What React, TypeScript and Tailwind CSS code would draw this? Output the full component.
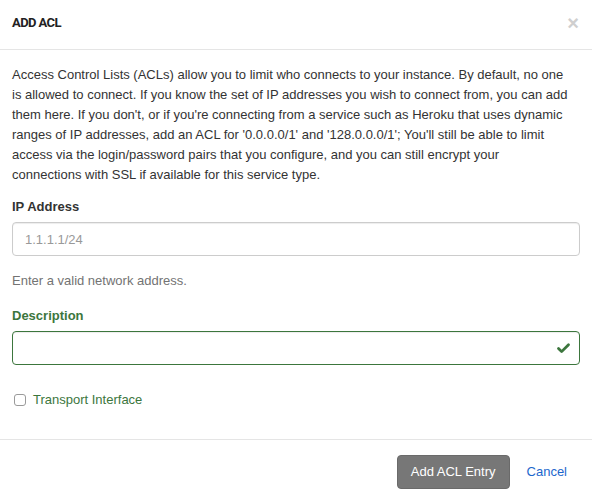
import { Check } from "lucide-react"

export default function App() {
  return (
    <div className="w-[592px] h-[500px] bg-white text-[#333] text-[13px] font-['Liberation_Sans',Arial,sans-serif]">
      <div className="h-[50px] px-3 pt-[14px] flex items-start justify-between border-b border-[#e5e5e5]">
        <h4 className="font-['Roboto',sans-serif] font-bold text-[13px] leading-[17px] tracking-[-0.6px] text-[#222]">ADD ACL</h4>
        <button className="text-[20px] leading-4 font-bold text-[#cfcfcf] pr-[1px] pt-[1px]">×</button>
      </div>

      <div className="px-3 pt-[15px]">
        <p className="leading-5">
          Access Control Lists (ACLs) allow you to limit who connects to your instance. By default, no one
          <br />
          is allowed to connect. If you know the set of IP addresses you wish to connect from, you can add
          <br />
          them here. If you don't, or if you're connecting from a service such as Heroku that uses dynamic
          <br />
          ranges of IP addresses, add an ACL for '0.0.0.0/1' and '128.0.0.0/1'; You'll still be able to limit
          <br />
          access via the login/password pairs that you configure, and you can still encrypt your
          <br />
          connections with SSL if available for this service type.
        </p>

        <div className="mt-3">
          <label className="block font-bold leading-5 mb-[5px]">IP Address</label>
          <input
            placeholder="1.1.1.1/24"
            className="w-full h-[34px] px-3 border border-[#ccc] rounded-[4px] shadow-[inset_0_1px_1px_rgba(0,0,0,0.075)] placeholder:text-[#999] outline-none"
          />
          <p className="mt-[15px] leading-5 text-[#737373]">Enter a valid network address.</p>
        </div>

        <div className="mt-[15px]">
          <label className="block font-bold leading-5 mb-[5px] text-[#3c763d]">Description</label>
          <div className="relative">
            <input className="w-full h-[34px] px-3 pr-8 border border-[#3c763d] rounded-[4px] shadow-[inset_0_1px_1px_rgba(0,0,0,0.075)] outline-none" />
            <Check className="absolute right-[9px] top-[10px] w-[15px] h-[15px] text-[#3c763d]" strokeWidth={4.5} />
          </div>
        </div>

        <label className="mt-[25px] flex items-center leading-5 text-[#3c763d]">
          <span className="ml-[2px] w-[12px] h-[12px] border border-[#9a9a9a] rounded-[3px] bg-white" />
          <span className="ml-[7px]">Transport Interface</span>
        </label>
      </div>

      <div className="mt-[29px] border-t border-[#e5e5e5] pl-3 pr-[13px] pt-[15px] flex justify-end items-center">
        <button className="h-[34px] px-[13px] rounded-[4px] bg-[#777] border border-[#6a6a6a] text-white leading-5">
          Add ACL Entry
        </button>
        <a className="ml-[5px] px-3 leading-5 text-[#1d67cd]">Cancel</a>
      </div>
    </div>
  )
}
